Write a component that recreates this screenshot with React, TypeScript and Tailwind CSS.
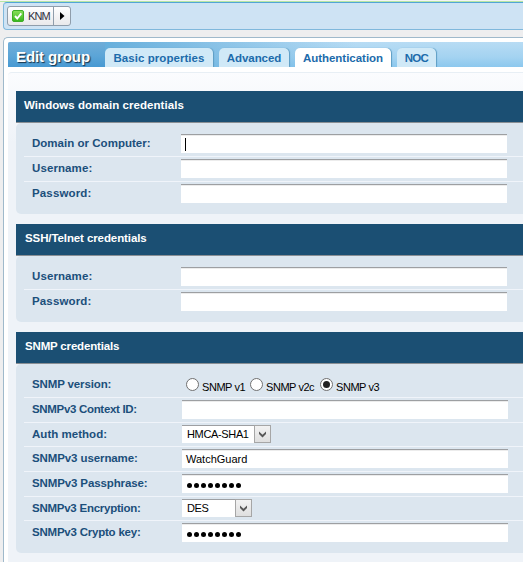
import type { ReactNode } from "react";

function Section({ title, text, children }: { title: string; text: string; children: ReactNode }) {
  return (
    <section className="mb-[10px]">
      <h2 className={`h-8 border-b border-[#8a8f94] bg-[#1b4f73] text-[11.5px] leading-[29px] font-bold text-white ${text}`}>
        {title}
      </h2>
      <div className="rounded-l-[5px] bg-[#dce6ef] pt-[9px] pb-[11px] pl-2">{children}</div>
    </section>
  );
}

type RowProps = { label: string; tracking: string; size?: "normal" | "short" | "last"; shifted?: boolean; children: ReactNode };

function Row({ label, tracking, size = "normal", shifted, children }: RowProps) {
  const height = size === "last" ? "h-[21px]" : size === "short" ? "h-6 border-b" : "h-[25px] border-b";
  return (
    <div className={`flex border-[#f0f4fa] pt-[2px] ${height}`}>
      <div className={`shrink-0 pl-2 text-[11.5px] leading-[18px] font-bold whitespace-nowrap text-[#1b4f7b] ${tracking} ${shifted ? "w-[158px]" : "w-[157px]"}`}>
        {label}
      </div>
      {children}
    </div>
  );
}

function Field({ value = "", caret, secret }: { value?: string; caret?: boolean; secret?: boolean }) {
  return (
    <div className="flex h-[19px] w-[326px] shrink-0 items-center border-t border-[#9d9fa2] bg-white pl-1 text-[11px] text-black shadow-[inset_0_1px_0_#ececec]">
      {caret && <span className="h-[13px] w-px bg-black" />}
      {secret ? (
        <span className="flex gap-[2px] pt-[3px] pl-[1px]">
          {Array.from({ length: 8 }, (_, i) => (
            <span key={i} className="size-[5px] rounded-full bg-black" />
          ))}
        </span>
      ) : (
        <span className="pt-px">{value}</span>
      )}
    </div>
  );
}

function Select({ value, width }: { value: string; width: string }) {
  return (
    <div className={`flex h-[18px] border-t border-[#9d9fa2] bg-white text-[11px] leading-[17px] text-black ${width}`}>
      <span className="flex-1 pl-[5px] tracking-[-0.35px] whitespace-nowrap">{value}</span>
      <span className="-mt-px flex h-[18px] w-[17px] items-center justify-center border border-[#a6a6a6] bg-linear-to-b from-[#f2f2f2] to-[#dfdfdf]">
        <svg width="9" height="7" viewBox="0 0 9 7">
          <path d="M1 .5v2.6L4.5 6.6L8 3.1V.5L4.5 3.8Z" fill="#565656" />
        </svg>
      </span>
    </div>
  );
}

function Radio({ label, width, checked }: { label: string; width: string; checked?: boolean }) {
  return (
    <span className={`flex shrink-0 ${width}`}>
      <span className="flex size-[13px] shrink-0 items-center justify-center rounded-full border border-[#707070] bg-white">
        {checked && <span className="size-[7px] rounded-full bg-[#222]" />}
      </span>
      <span className="pt-[2px] pl-[3px] text-[11px] leading-[14px] tracking-[-0.45px] whitespace-nowrap text-black">{label}</span>
    </span>
  );
}

function Tab({ label, active, width }: { label: string; active?: boolean; width: string }) {
  return (
    <div
      className={`h-[19px] shrink-0 rounded-t-[5px] text-center leading-[21px] font-bold whitespace-nowrap text-[#1c6bab] shadow-[1px_0_1px_#5d9dc4] ${width} ${active ? "bg-white" : "bg-[#d0e9f7]"}`}
    >
      {label}
    </div>
  );
}

export default function App() {
  return (
    <div className="h-[562px] w-full overflow-hidden bg-[#eeeeef] font-['Liberation_Sans',Arial,sans-serif]">
      <div className="h-[2px] border-b border-[#b7e6a5] bg-[#f4f4f4]" />
      <div className="ml-[3px] flex h-7 items-start rounded-l-[4px] border border-r-0 border-[#80b8dc] border-t-[#52a5d6] bg-[#cee3f4] pt-[3px] pl-[3px]">
        <div className="flex h-5 w-16 rounded-[3px] border border-[#8f9dab] bg-linear-to-b from-white to-[#e9e9eb]">
          <div className="flex w-[46px] items-center border-r border-[#8f9dab] pl-1">
            <svg width="12" height="12" viewBox="0 0 12 12">
              <defs>
                <linearGradient id="ok" x2="0" y2="1">
                  <stop stopColor="#8be05b" />
                  <stop offset="1" stopColor="#36b51c" />
                </linearGradient>
              </defs>
              <rect x=".5" y=".5" width="11" height="11" rx="1.5" fill="url(#ok)" stroke="#3fae28" />
              <path d="M3 6l2.2 2.5L9.3 3.3" fill="none" stroke="#fff" strokeWidth="1.9" />
            </svg>
            <span className="pb-px pl-[4px] text-[11px] leading-4 tracking-[-0.9px] text-[#303040]">KNM</span>
          </div>
          <div className="flex flex-1 items-center pl-[6px]">
            <svg width="5" height="8" viewBox="0 0 5 8">
              <path d="M0 0L4.5 4L0 8Z" fill="#000" />
            </svg>
          </div>
        </div>
      </div>
      <main className="mt-[7px] ml-[3px] h-[540px] rounded-tl-[5px] border border-r-0 border-[#9fb9cb] bg-white pt-1 pl-1">
        <div className="flex h-[25px] items-end overflow-hidden rounded-tl-[2px] bg-[linear-gradient(to_bottom,#b8dcf4,#a4d3f1_60%,#8cc8ee)]">
          <div className="h-full w-[97px] shrink-0 bg-[linear-gradient(to_bottom,#70add8,#5ca5d7_55%,#4799d2)] pl-2 text-[15px] leading-[30px] font-bold tracking-[-0.1px] whitespace-nowrap text-white [text-shadow:1px_1px_1px_#17334a]">
            Edit group
          </div>
          <div className="flex h-full flex-1 items-end gap-[6px] bg-linear-to-r from-[#67afdc] to-transparent to-60%">
            <Tab label="Basic properties" width="w-[108px] text-[11.5px] tracking-[0.06px]" />
            <Tab label="Advanced" width="w-[70px] text-[11.5px] tracking-[-0.05px]" />
            <Tab label="Authentication" width="w-[96px] text-[11.5px] tracking-[-0.02px]" active />
            <Tab label="NOC" width="w-[39px] text-[11.5px] tracking-[-0.7px]" />
          </div>
        </div>
        <div className="mt-[5px] h-[500px] rounded-tl-[4px] border-t border-[#e8eff5] bg-[linear-gradient(to_bottom,#fbfcfe,#eff3f8_70px)] pt-[18px] pl-2">
          <Section title="Windows domain credentials" text="pl-2 tracking-[0.06px]">
            <Row label="Domain or Computer:" tracking="tracking-[0.02px]"><Field caret /></Row>
            <Row label="Username:" tracking="tracking-[0.1px]"><Field /></Row>
            <Row label="Password:" tracking="tracking-[0.15px]" size="last"><Field /></Row>
          </Section>
          <Section title="SSH/Telnet credentials" text="pl-[9px] tracking-[-0.1px]">
            <Row label="Username:" tracking="tracking-[0.1px]"><Field /></Row>
            <Row label="Password:" tracking="tracking-[0.15px]" size="last"><Field /></Row>
          </Section>
          <Section title="SNMP credentials" text="pl-[9px] tracking-[-0.17px]">
            <Row label="SNMP version:" tracking="tracking-[-0.13px]" shifted>
              <div className="flex pt-[3px] pl-1">
                <Radio label="SNMP v1" width="w-16" />
                <Radio label="SNMP v2c" width="w-[70px]" />
                <Radio label="SNMP v3" width="w-16" checked />
              </div>
            </Row>
            <Row label="SNMPv3 Context ID:" tracking="tracking-[-0.32px]" shifted><Field /></Row>
            <Row label="Auth method:" tracking="tracking-[0.03px]" size="short" shifted><Select value="HMCA-SHA1" width="w-[89px]" /></Row>
            <Row label="SNMPv3 username:" tracking="tracking-[-0.1px]" shifted><Field value="WatchGuard" /></Row>
            <Row label="SNMPv3 Passphrase:" tracking="tracking-[-0.12px]" shifted><Field secret /></Row>
            <Row label="SNMPv3 Encryption:" tracking="tracking-[-0.25px]" size="short" shifted><Select value="DES" width="w-[70px]" /></Row>
            <Row label="SNMPv3 Crypto key:" tracking="tracking-[-0.22px]" size="last" shifted><Field secret /></Row>
          </Section>
        </div>
      </main>
    </div>
  );
}
